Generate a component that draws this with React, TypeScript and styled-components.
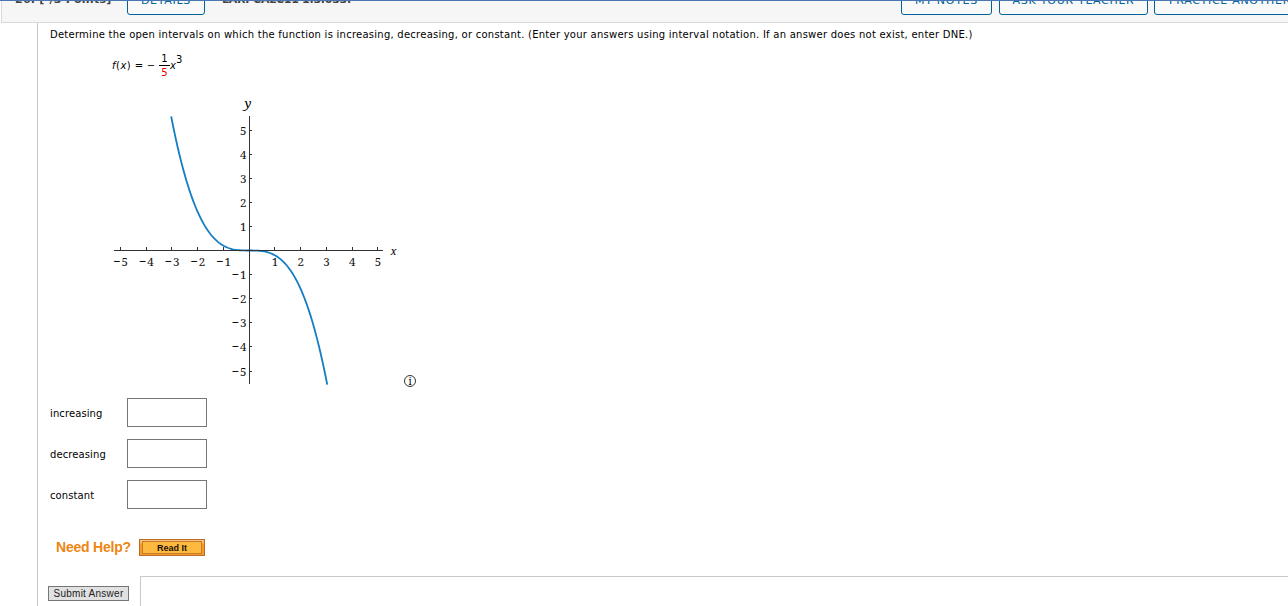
import React from 'react';
import styled, { createGlobalStyle } from 'styled-components';

const GlobalStyle = createGlobalStyle`
  * {
    box-sizing: border-box;
  }
  body {
    margin: 0;
    background-color: #fff;
    overflow: hidden;
  }
`;

const Page = styled.div`
  width: 1288px;
  height: 606px;
  overflow: hidden;
  border-top: 1px solid #4a76b3;
  font-family: 'DejaVu Sans', Verdana, sans-serif;
  font-size: 10px;
  color: #000;
`;

const Header = styled.header`
  display: flex;
  align-items: flex-end;
  height: 22px;
  padding-bottom: 7px;
  border-bottom: 1px solid #d9d9d9;
  border-left: 1px solid #d9d9d9;
  margin-left: 1px;
  background-color: #f6f6f6;
  overflow: hidden;
  white-space: nowrap;
`;

const HeaderText = styled.span<{
  $width: number;
  $indent: number;
  $spacing: number;
}>`
  flex: none;
  width: ${({ $width }) => $width}px;
  padding-left: ${({ $indent }) => $indent}px;
  margin-bottom: 8px;
  font-size: 11px;
  font-weight: bold;
  line-height: 14px;
  letter-spacing: ${({ $spacing }) => $spacing}px;
  color: #444;
`;

const HeaderButton = styled.button<{ $width: number }>`
  flex: none;
  width: ${({ $width }) => $width}px;
  height: 29px;
  margin-right: 7px;
  padding: 0 0 1px;
  border: 1px solid #006298;
  border-radius: 3px;
  background-color: #f9f9f9;
  font-family: 'DejaVu Sans', sans-serif;
  font-size: 11px;
  letter-spacing: 0.7px;
  color: #006298;

  &:nth-last-child(2) {
    margin-right: 6px;
  }
`;

const Content = styled.main`
  height: 583px;
  margin-left: 37px;
  padding-left: 12px;
  border-left: 1px solid #c8c8c8;
`;

const Question = styled.p`
  margin: 0;
  padding-top: 5px;
  line-height: 14px;
  letter-spacing: 0.25px;
  white-space: nowrap;
`;

const Formula = styled.div`
  display: flex;
  align-items: center;
  height: 46px;
  margin-left: 62px;
  white-space: pre;
`;

const Operator = styled.span`
  width: 12px;
  text-align: center;
`;

const Call = styled.span`
  width: 21px;
  letter-spacing: 0.5px;
`;

const Fraction = styled.span`
  display: flex;
  flex-direction: column;
  align-items: center;
  width: 11px;
  margin-left: 2px;
  padding-top: 1px;
  line-height: 12px;
`;

const Numerator = styled.span`
  width: 100%;
  border-bottom: 1px solid #000;
  text-align: center;
`;

const Denominator = styled.span`
  padding-top: 1px;
  color: #e00000;
`;

const Exponent = styled.sup`
  align-self: flex-start;
  padding-top: 12px;
  font-size: 10px;
  line-height: 12px;
`;

const Figure = styled.div`
  display: flex;
  align-items: flex-end;
  height: 304px;
  margin: 0 0 6px 50px;
`;

const Graph = styled.svg`
  display: block;
  flex: none;
  font-family: 'Noto Serif', 'DejaVu Serif', serif;
`;

const AnswerRow = styled.label`
  display: flex;
  align-items: center;
  height: 29px;
  margin-bottom: 12px;
  letter-spacing: 0.1px;
`;

const AnswerLabel = styled.span`
  width: 77px;
  padding-top: 2px;
`;

const AnswerInput = styled.input`
  width: 80px;
  height: 29px;
  border: 1px solid #767676;
`;

const Help = styled.div`
  display: flex;
  align-items: center;
  height: 18px;
  margin: 29px 0 0 6px;
`;

const HelpTitle = styled.span`
  width: 83px;
  font: bold 14px 'Liberation Sans', Arial, sans-serif;
  letter-spacing: -0.22px;
  color: #ee8512;
`;

const ReadButton = styled.button`
  width: 66px;
  height: 17px;
  padding: 1px 2px;
  border: 1px solid #b9692a;
  background: linear-gradient(#fbc890, #f79a2c 35%, #f79a2c);
`;

const ReadLabel = styled.span`
  display: block;
  height: 13px;
  border: 1px solid #c87a20;
  background-color: #fdb940;
  font: bold 9px/12px 'Liberation Sans', Arial, sans-serif;
  color: #1c1000;
`;

const Footer = styled.div`
  display: flex;
  align-items: flex-start;
  margin: 20px 0 0 -2px;
`;

const SubmitButton = styled.button`
  width: 81px;
  height: 15px;
  margin-top: 10px;
  padding: 0;
  border: 1px solid #767676;
  background-color: #e1e1e1;
  font: 10px/13px 'Liberation Sans', Arial, sans-serif;
  letter-spacing: 0.25px;
  color: #222;
`;

const FooterPanel = styled.div`
  flex: 1;
  height: 40px;
  margin-left: 11px;
  border-top: 1px solid #c8c8c8;
  border-left: 1px solid #c8c8c8;
`;

const ticks = [-5, -4, -3, -2, -1, 1, 2, 3, 4, 5];
const originX = 149.2;
const originY = 160.5;
const unitX = 25.75;
const unitY = 24.1;

const curve = Array.from({ length: 122 }, (_, i) => {
  const x = -3.03 + (i * 6.06) / 121;
  const y = -(x ** 3) / 5;
  return `${i ? 'L' : 'M'}${originX + x * unitX} ${originY - y * unitY}`;
}).join(' ');

// the minus is set larger than the digit so that it reads at this size
function TickText({ n }: { n: number }) {
  return (
    <>
      {n < 0 && (
        <tspan fontSize="13" letterSpacing="1">
          −
        </tspan>
      )}
      {Math.abs(n)}
    </>
  );
}

function CubicGraph() {
  return (
    <Graph width="330" height="302" viewBox="0 0 330 302">
      <path d={curve} fill="none" stroke="#147dc3" strokeWidth="1.8" />
      <path
        d={`M14 ${originY}H283M149.5 26V294`}
        stroke="#333"
        strokeWidth="1"
      />
      {ticks.map((n) => (
        <g key={n} fontSize="11.5" fill="#111">
          <path
            d={`M${Math.floor(originX + n * unitX) + 0.5} 157V160M149 ${
              Math.floor(originY - n * unitY) + 0.5
            }H152`}
            stroke="#333"
          />
          <text x={originX + n * unitX} y="176" textAnchor="middle">
            <TickText n={n} />
          </text>
          <text x="146.5" y={originY - n * unitY + 4.5} textAnchor="end">
            <TickText n={n} />
          </text>
        </g>
      ))}
      <text x="144.5" y="18" fontSize="13" fontStyle="italic">
        y
      </text>
      <text x="290.5" y="165" fontSize="11" fontStyle="italic">
        x
      </text>
      <circle cx="310" cy="291" r="5.5" fill="none" stroke="#333" />
      <text x="310" y="295" fontSize="10" textAnchor="middle">
        i
      </text>
    </Graph>
  );
}

function App() {
  return (
    <>
      <GlobalStyle />
      <Page>
        <Header>
          <HeaderText $width={125} $indent={13} $spacing={0.25}>
            26. [-/3 Points]
          </HeaderText>
          <HeaderButton $width={78}>DETAILS</HeaderButton>
          <HeaderText $width={689} $indent={10} $spacing={-0.25}>
            LARPCALC11 1.3.033.
          </HeaderText>
          <HeaderButton $width={91}>MY NOTES</HeaderButton>
          <HeaderButton $width={149}>ASK YOUR TEACHER</HeaderButton>
          <HeaderButton $width={152}>PRACTICE ANOTHER</HeaderButton>
        </Header>
        <Content>
          <Question>
            Determine the open intervals on which the function is increasing,
            decreasing, or constant. (Enter your answers using interval
            notation. If an answer does not exist, enter DNE.)
          </Question>
          <Formula>
            <Call>
              <i>f</i>(<i>x</i>)
            </Call>
            <Operator>=</Operator>
            <Operator>−</Operator>
            <Fraction>
              <Numerator>1</Numerator>
              <Denominator>5</Denominator>
            </Fraction>
            <i>x</i>
            <Exponent>3</Exponent>
          </Formula>
          <Figure>
            <CubicGraph />
          </Figure>
          {['increasing', 'decreasing', 'constant'].map((name) => (
            <AnswerRow key={name}>
              <AnswerLabel>{name}</AnswerLabel>
              <AnswerInput type="text" />
            </AnswerRow>
          ))}
          <Help>
            <HelpTitle>Need Help?</HelpTitle>
            <ReadButton>
              <ReadLabel>Read It</ReadLabel>
            </ReadButton>
          </Help>
          <Footer>
            <SubmitButton>Submit Answer</SubmitButton>
            <FooterPanel />
          </Footer>
        </Content>
      </Page>
    </>
  );
}

export default App;
